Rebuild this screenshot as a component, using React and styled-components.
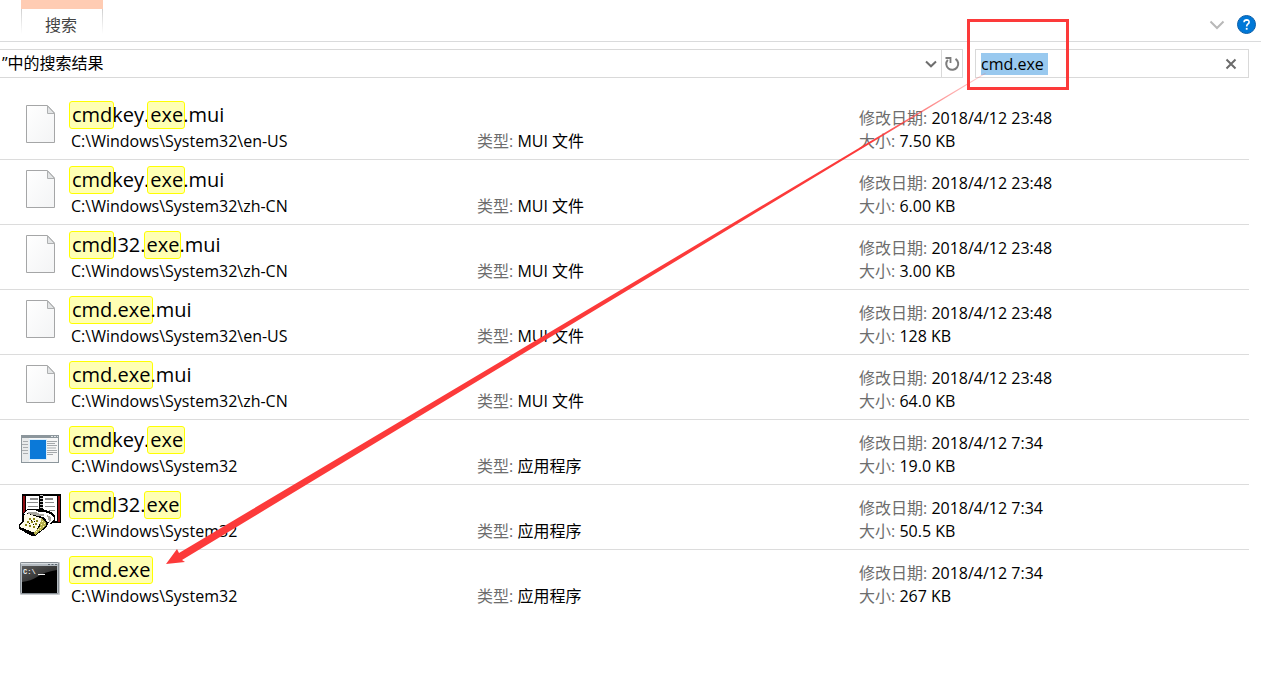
import React, { useEffect, useRef } from "react";
import styled, { createGlobalStyle } from "styled-components";

const GlobalStyle = createGlobalStyle`
    * {
        box-sizing: border-box;
    }
    body {
        margin: 0;
        background: #ffffff;
        color: #000000;
        font-family: "Open Sans", "Noto Sans CJK SC", sans-serif;
        font-size: 16px;
    }
`
const Window = styled.div`
    position: relative;
    width: 100%;
    overflow: hidden;
`
const Ribbon = styled.header`
    display: flex;
    justify-content: space-between;
    height: 42px;
    padding: 0 5px 0 21px;
    border-bottom: 1px solid #dadbdc;
`
const RibbonTab = styled.button`
    width: 82px;
    height: 34px;
    padding: 7px 2px 0 0;
    border: 0;
    border-top: 9px solid #ffccb3;
    background:
        linear-gradient(#cfcfcf, #ffffff) left / 1px 100% no-repeat,
        linear-gradient(#cfcfcf, #ffffff) right / 1px 100% no-repeat,
        #ffffff;
    color: #444444;
    font-family: inherit;
    font-size: 16px;
    line-height: 18px;
`
const RibbonActions = styled.div`
    display: flex;
    align-items: center;
    gap: 9px;
    padding-top: 8px;
`
const IconButton = styled.button`
    display: flex;
    align-items: center;
    justify-content: center;
    width: ${(props) => props.$width || 20}px;
    height: 100%;
    padding: 0;
    border: 0;
    border-left: ${(props) => (props.$divided ? "1px solid #d9d9d9" : "0")};
    background: transparent;
`
const Toolbar = styled.div`
    display: flex;
    gap: 12px;
    padding: 7px 12px 17px 0;
`
const AddressBar = styled.div`
    display: flex;
    flex: 1;
    height: 29px;
    border: 1px solid #d9d9d9;
    border-left: 0;
`
const AddressText = styled.span`
    flex: 1;
    overflow: hidden;
    padding-left: 2px;
    line-height: 27px;
    white-space: nowrap;
`
const SearchForm = styled.form`
    display: flex;
    align-items: center;
    width: 274px;
    height: 29px;
    padding: 0 7px 0 5px;
    border: 1px solid #d9d9d9;
`
const SearchInput = styled.input`
    flex: 1;
    min-width: 0;
    height: 22px;
    padding: 0;
    border: 0;
    outline: 0;
    background: transparent;
    color: #000000;
    font-family: inherit;
    font-size: 16px;
    line-height: 22px;

    &::selection {
        background: #99c9ef;
        color: #000000;
    }
`
const ResultList = styled.ul`
    margin: 0 12px 0 0;
    padding: 0;
    list-style: none;
`
const ResultRow = styled.li`
    display: grid;
    grid-template-columns: 71px 406fr 382fr 390fr;
    height: 65px;
    border-bottom: 1px solid #dcdcdc;

    &:last-child {
        border-bottom: 0;
    }
`
const IconCell = styled.div`
    padding: 5px 0 0 16px;
`
const NameCell = styled.div`
    padding-top: 6px;
`
const FileName = styled.div`
    height: 28px;
    font-size: 20px;
    line-height: 26px;
    white-space: nowrap;
`
const Match = styled.mark`
    display: inline-block;
    height: 28px;
    margin: 0 -2px;
    padding: 0 1px 0 2px;
    border: 1px solid #ffff00;
    border-radius: 3px;
    background: #ffffb3;
    color: inherit;
`
const FilePath = styled.div`
    line-height: 24px;
    white-space: nowrap;
`
const DetailCell = styled.div`
    padding-top: ${(props) => (props.$single ? 35 : 12)}px;
    line-height: 23px;
    white-space: nowrap;
`
const Detail = styled.div`
    height: 23px;
`
const Label = styled.span`
    color: #6d6d6d;
`
const Annotation = styled.svg`
    position: absolute;
    top: 0;
    left: 0;
    pointer-events: none;
`

function PageIcon() {
  return (
    <svg width="48" height="48" viewBox="0 0 48 48" aria-hidden="true">
      <defs>
        <linearGradient id="page" x1="0" y1="0" x2="1" y2="1">
          <stop offset="0" stopColor="#ffffff" />
          <stop offset="1" stopColor="#f3f4f5" />
        </linearGradient>
      </defs>
      <path d="M10.500 5.500H31.500L38.500 13V42.500H10.500Z" fill="url(#page)" stroke="#a5a6a7" />
      <path d="M31.500 6V13.500H38.500Z" fill="#e3e5e6" stroke="#aeb0b1" />
    </svg>
  );
}

function ProgramIcon() {
  return (
    <svg width="48" height="48" viewBox="0 0 48 48" aria-hidden="true" shapeRendering="crispEdges">
      <rect x="5" y="10" width="38" height="28" fill="#8c969c" />
      <rect x="6" y="13" width="36" height="24" fill="#f6f6f6" />
      <rect x="6" y="13" width="7" height="24" fill="#e9ebec" />
      <path d="M35 11h2v1h-2zM38 11h2v1h-2zM41 11h1v1h-1z" fill="#dfe4e7" />
      <path d="M7 16h5v1H7zM6 19h6v1H6zM7 22h5v1H7zM6 25h6v1H6zM7 28h5v1H7z" fill="#a9adb0" />
      <rect x="13" y="14" width="18" height="21" fill="#d9edfb" />
      <rect x="14" y="15" width="16" height="19" fill="#0b79d8" />
      <path d="M31 16h10v1H31zM31 18h8v1H31zM31 20h10v1H31zM31 25h10v1H31zM31 27h10v1H31zM31 29h6v1H31z" fill="#a4a8ab" />
      <path d="M31 22h9v2H31z" fill="#d0d2d3" />
    </svg>
  );
}

function PhoneBookIcon() {
  return (
    <svg width="48" height="48" viewBox="0 0 48 48" aria-hidden="true" shapeRendering="crispEdges">
      <path d="M6 4H45V33H6Z" fill="#000000" />
      <path d="M7 6H9V24H7ZM42 6H44V32H42Z" fill="#910d12" />
      <path d="M10 6H23V24H10ZM27 6H41V31H27Z" fill="#ffffff" />
      <path d="M24 5h3v1h-3zM24 8h3v1h-3zM24 11h3v1h-3zM24 14h3v1h-3zM24 17h3v1h-3z" fill="#c8c8c8" />
      <path d="M14 8h8v2h-8zM11 12h11v1H11zM12 16h10v1H12zM29 8h8v2h-8zM29 12h9v1h-9zM29 16h10v1H29zM33 20h6v1h-6z" fill="#8b8b8b" />
      <path d="M7 23L11 19H20L27 19L35 22L39 26V31L35 34L32 33L31 37L19 46H16L3 39V35L7 30Z" fill="#000000" />
      <path d="M8 23L12 20H19L23 22H28L35 24L38 28V30L34 33L31 32L29 28L24 26L12 23L9 25Z" fill="#ffffff" />
      <path d="M12 22L20 22L24 24H28V26H22L12 24ZM31 25L35 27V31L33 32Z" fill="#a8a7a0" />
      <path d="M8 25L12 24L25 28V31L19 43L4 37V35L8 31Z" fill="#fffde8" />
      <path d="M25 28L27 29L30 33V36L19 45L18 43L24 36Z" fill="#b5b14b" />
      <path d="M26 31h1v1h-1zM28 33h1v1h-1zM25 34h1v1h-1zM27 36h1v1h-1zM24 37h1v1h-1zM22 39h1v1h-1zM24 40h1v1h-1zM20 41h1v1h-1z" fill="#fff9be" />
      <path d="M13 28h2v2h-2zM17 28h2v2h-2zM20 30h2v2h-2zM11 31h2v2h-2zM15 31h2v2h-2zM19 33h2v2h-2zM9 34h2v2H9zM13 35h2v2h-2zM17 36h2v2h-2z" fill="#8a8716" />
      <path d="M15 30h1v1h-1zM18 31h1v1h-1zM13 33h1v1h-1zM17 34h1v1h-1z" fill="#000000" />
    </svg>
  );
}

function ConsoleIcon() {
  return (
    <svg width="48" height="48" viewBox="0 0 48 48" aria-hidden="true">
      <defs>
        <linearGradient id="glare" x1="0" y1="0" x2="1" y2="1">
          <stop offset="0" stopColor="#5a5a5a" />
          <stop offset="1" stopColor="#1c1c1c" />
        </linearGradient>
      </defs>
      <rect x="4" y="7" width="40" height="33" rx="1" fill="#c9cccf" />
      <rect x="4.500" y="7.500" width="38" height="31" rx="1" fill="#b3bac0" stroke="#868d93" />
      <path d="M5 8.500H42" stroke="#d9dee2" />
      <path d="M32 9.500H34M35.500 9.500H37.500M39 9.500H41" stroke="#59646e" />
      <rect x="6" y="11" width="35" height="27" fill="#000000" />
      <path d="M6 11H41V15Q28 17 21 22Q15 26 6 27Z" fill="url(#glare)" />
      <text x="7" y="19" fill="#f2f2f2" fontFamily="Liberation Mono, monospace" fontSize="7" fontWeight="700">C:\</text>
      <path d="M22 19.500H29" stroke="#f2f2f2" strokeWidth="1" />
    </svg>
  );
}

const icons = {
  page: PageIcon,
  program: ProgramIcon,
  phone: PhoneBookIcon,
  console: ConsoleIcon,
};

// Partes do nome entre colchetes sao destacadas
const results = [
  { icon: "page", name: "[cmd]key.[exe].mui", path: "C:\\Windows\\System32\\en-US", type: "MUI 文件", date: "2018/4/12 23:48", size: "7.50 KB" },
  { icon: "page", name: "[cmd]key.[exe].mui", path: "C:\\Windows\\System32\\zh-CN", type: "MUI 文件", date: "2018/4/12 23:48", size: "6.00 KB" },
  { icon: "page", name: "[cmd]l32.[exe].mui", path: "C:\\Windows\\System32\\zh-CN", type: "MUI 文件", date: "2018/4/12 23:48", size: "3.00 KB" },
  { icon: "page", name: "[cmd.exe].mui", path: "C:\\Windows\\System32\\en-US", type: "MUI 文件", date: "2018/4/12 23:48", size: "128 KB" },
  { icon: "page", name: "[cmd.exe].mui", path: "C:\\Windows\\System32\\zh-CN", type: "MUI 文件", date: "2018/4/12 23:48", size: "64.0 KB" },
  { icon: "program", name: "[cmd]key.[exe]", path: "C:\\Windows\\System32", type: "应用程序", date: "2018/4/12 7:34", size: "19.0 KB" },
  { icon: "phone", name: "[cmd]l32.[exe]", path: "C:\\Windows\\System32", type: "应用程序", date: "2018/4/12 7:34", size: "50.5 KB" },
  { icon: "console", name: "[cmd.exe]", path: "C:\\Windows\\System32", type: "应用程序", date: "2018/4/12 7:34", size: "267 KB" },
];

function HighlightedName({ name }) {
  return name
    .split(/(\[[^\]]+\])/)
    .filter(Boolean)
    .map((part, i) =>
      part[0] === "[" ? <Match key={i}>{part.slice(1, -1)}</Match> : <span key={i}>{part}</span>
    );
}

function Result({ item }) {
  const Icon = icons[item.icon];
  return (
    <ResultRow>
      <IconCell>
        <Icon />
      </IconCell>
      <NameCell>
        <FileName>
          <HighlightedName name={item.name} />
        </FileName>
        <FilePath>{item.path}</FilePath>
      </NameCell>
      <DetailCell $single>
        <Detail>
          <Label>类型:</Label> {item.type}
        </Detail>
      </DetailCell>
      <DetailCell>
        <Detail>
          <Label>修改日期:</Label> {item.date}
        </Detail>
        <Detail>
          <Label>大小:</Label> {item.size}
        </Detail>
      </DetailCell>
    </ResultRow>
  );
}

function App() {
  const searchRef = useRef(null);

  useEffect(() => {
    searchRef.current.focus();
    searchRef.current.select();
  }, []);

  return (
    <Window>
      <GlobalStyle />
      <Ribbon>
        <RibbonTab type="button">搜索</RibbonTab>
        <RibbonActions>
          <IconButton type="button" aria-label="展开功能区">
            <svg width="16" height="10" viewBox="0 0 16 10">
              <path d="M1.500 1.500L8 8L14.500 1.500" fill="none" stroke="#b8b8b8" strokeWidth="2" />
            </svg>
          </IconButton>
          <IconButton type="button" aria-label="帮助">
            <svg width="20" height="20" viewBox="0 0 20 20">
              <circle cx="10.500" cy="9.500" r="9" fill="#0078d7" stroke="#0c5ea8" />
              <path d="M8 7.200Q8.100 4.900 10.700 4.900Q13.200 5 13.100 7.100Q13 8.300 11.800 9.200Q10.700 10 10.700 11.500" fill="none" stroke="#ffffff" strokeWidth="1.600" />
              <rect x="9.800" y="12.900" width="1.800" height="1.800" fill="#ffffff" />
            </svg>
          </IconButton>
        </RibbonActions>
      </Ribbon>
      <Toolbar>
        <AddressBar>
          <AddressText>”中的搜索结果</AddressText>
          <IconButton type="button" aria-label="以前的位置">
            <svg width="12" height="8" viewBox="0 0 12 8">
              <path d="M1 1.500L6 6.300L11 1.500" fill="none" stroke="#6e6e6e" strokeWidth="2" />
            </svg>
          </IconButton>
          <IconButton type="button" aria-label="刷新" $width={21} $divided>
            <svg width="16" height="16" viewBox="0 0 16 16">
              <path d="M11.500 2.800A6 6 0 1 1 3.800 3.800" fill="none" stroke="#7d7d7d" strokeWidth="2" />
              <path d="M1.500 2H6.500V7" fill="none" stroke="#7d7d7d" strokeWidth="1.800" />
            </svg>
          </IconButton>
        </AddressBar>
        <SearchForm onSubmit={(e) => e.preventDefault()}>
          <SearchInput ref={searchRef} aria-label="搜索" defaultValue="cmd.exe " spellCheck={false} />
          <IconButton type="button" aria-label="清除">
            <svg width="12" height="12" viewBox="0 0 12 12">
              <path d="M1.500 1.500L10.500 10.500M10.500 1.500L1.500 10.500" stroke="#6b6b6b" strokeWidth="2" />
            </svg>
          </IconButton>
        </SearchForm>
      </Toolbar>
      <ResultList>
        {results.map((item, i) => (
          <Result key={i} item={item} />
        ))}
      </ResultList>
      <Annotation width="1080" height="620" viewBox="0 0 1080 620" aria-hidden="true">
        <defs>
          <linearGradient id="tail" gradientUnits="userSpaceOnUse" x1="870" y1="142" x2="986" y2="74">
            <stop offset="0" stopColor="#fc3a3a" />
            <stop offset="1" stopColor="#fc3a3a" stopOpacity="0.200" />
          </linearGradient>
        </defs>
        <path d="M166 564L177 549L179 553L985 73L986 73.500L182 560L185 562Z" fill="url(#tail)" />
        <rect x="968.500" y="20.500" width="99" height="68" fill="none" stroke="#fc3a3a" strokeWidth="3" />
      </Annotation>
    </Window>
  );
}

export default App;
